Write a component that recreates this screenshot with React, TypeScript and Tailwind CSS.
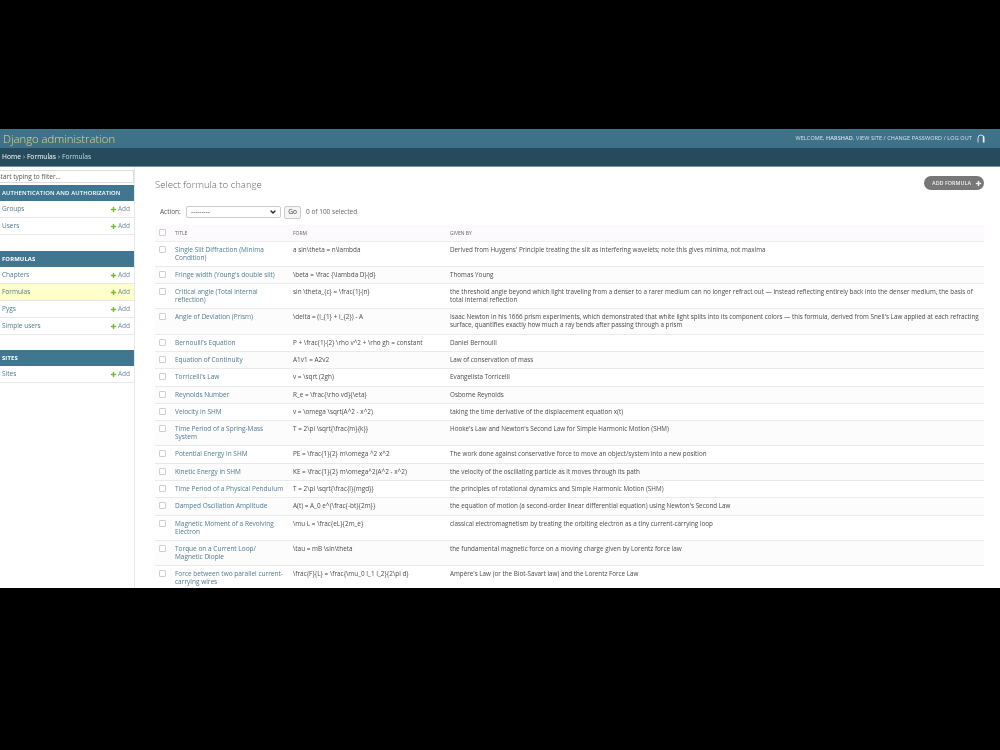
import React from 'react';
import { Plus, ChevronDown } from 'lucide-react';

const sections = [
  { name: 'Authentication and Authorization', bold: false, gap: 'mb-[16px]', rows: ['Groups', 'Users'] },
  { name: 'Formulas', bold: true, gap: 'mb-[15px]', rows: ['Chapters', 'Formulas', 'Pygs', 'Simple users'] },
  { name: 'Sites', bold: true, gap: 'mb-[15px]', rows: ['Sites'] },
];

const formulas = [
  ['Single Slit Diffraction (Minima Condition)', 'a sin\\theta = n\\lambda', "Derived from Huygens' Principle treating the slit as interfering wavelets; note this gives minima, not maxima"],
  ["Fringe width (Young's double slit)", '\\beta = \\frac {\\lambda D}{d}', 'Thomas Young'],
  ['Critical angle (Total internal reflection)', 'sin \\theta_{c} = \\frac{1}{n}', 'the threshold angle beyond which light traveling from a denser to a rarer medium can no longer refract out — instead reflecting entirely back into the denser medium, the basis of total internal reflection'],
  ['Angle of Deviation (Prism)', '\\delta = (i_{1} + i_{2}) - A', "Isaac Newton in his 1666 prism experiments, which demonstrated that white light splits into its component colors — this formula, derived from Snell's Law applied at each refracting surface, quantifies exactly how much a ray bends after passing through a prism"],
  ["Bernoulli's Equation", 'P + \\frac{1}{2} \\rho v^2 + \\rho gh = constant', 'Daniel Bernoulli'],
  ['Equation of Continuity', 'A1v1 = A2v2', 'Law of conservation of mass'],
  ["Torricelli's Law", 'v = \\sqrt (2gh)', 'Evangelista Torricelli'],
  ['Reynolds Number', 'R_e = \\frac{\\rho vd}{\\eta}', 'Osborne Reynolds'],
  ['Velocity in SHM', 'v = \\omega \\sqrt(A^2 - x^2)', 'taking the time derivative of the displacement equation x(t)'],
  ['Time Period of a Spring-Mass System', 'T = 2\\pi \\sqrt{\\frac{m}{k}}', "Hooke's Law and Newton's Second Law for Simple Harmonic Motion (SHM)"],
  ['Potential Energy in SHM', 'PE = \\frac{1}{2} m\\omega ^2 x^2', 'The work done against conservative force to move an object/system into a new position'],
  ['Kinetic Energy in SHM', 'KE = \\frac{1}{2} m\\omega^2(A^2 - x^2)', 'the velocity of the oscillating particle as it moves through its path'],
  ['Time Period of a Physical Pendulum', 'T = 2\\pi \\sqrt{\\frac{l}{mgd}}', 'the principles of rotational dynamics and Simple Harmonic Motion (SHM)'],
  ['Damped Oscillation Amplitude', 'A(t) = A_0 e^{\\frac{-bt}{2m}}', "the equation of motion (a second-order linear differential equation) using Newton's Second Law"],
  ['Magnetic Moment of a Revolving Electron', '\\mu L = \\frac{eL}{2m_e}', 'classical electromagnetism by treating the orbiting electron as a tiny current-carrying loop'],
  ['Torque on a Current Loop/ Magnetic Diople', '\\tau = mB \\sin\\theta', 'the fundamental magnetic force on a moving charge given by Lorentz force law'],
  ['Force between two parallel current-carrying wires', '\\frac{F}{L} = \\frac{\\mu_0 I_1 I_2}{2\\pi d}', "Ampère's Law (or the Biot-Savart law) and the Lorentz Force Law"],
];

const Checkbox = () => (
  <input type="checkbox" readOnly className="appearance-none block w-[7px] h-[7px] border border-[#cfcfcf] rounded-[1px] bg-white" />
);

const AddLink = () => (
  <span className="flex items-center gap-[1px] text-[#6b8c9c]">
    <Plus className="w-[7px] h-[7px] text-[#70bf2b]" strokeWidth={5} />
    Add
  </span>
);

export default function App() {
  return (
    <div className="h-[750px] bg-black overflow-hidden font-['Open_Sans','Noto_Sans',sans-serif]">
      <div className="h-[129px]" />
      <div className="h-[459px] bg-white overflow-hidden flex flex-col blur-[0.35px]">
        <header className="h-[19px] shrink-0 bg-[#3f7189] flex items-center justify-between pl-[3px] pr-[15px]">
          <div className="text-[11.3px] leading-none font-light text-[#e9dc7c]">Django administration</div>
          <div className="flex items-center gap-[5px] text-[5.5px] uppercase tracking-[0.02em] text-[#d5e2e9]">
            <span>
              Welcome, <b className="font-semibold">Harshad</b>. View site / Change password / Log out
            </span>
            <svg viewBox="0 0 8 9" className="w-[8px] h-[9px]" fill="none">
              <path d="M1 8.5V4a3 3 0 0 1 6 0v4.5" stroke="#f2f5f7" strokeWidth="0.8" />
              <path d="M6.5 2v6.5" stroke="#f2f5f7" strokeWidth="1.4" />
            </svg>
          </div>
        </header>
        <nav className="h-[19px] shrink-0 bg-[#264b5d] border-b border-[#6f95a8] flex items-center pl-[2px] text-[6.7px] text-[#c4dce8]">
          <span className="text-white">Home</span>
          <span className="mx-[2px]">›</span>
          <span className="text-white">Formulas</span>
          <span className="mx-[2px]">›</span>
          <span>Formulas</span>
        </nav>
        <div className="flex flex-1 min-h-0">
          <aside className="w-[135px] shrink-0 border-r border-[#e8e8e8] pt-[3px]">
            <div className="h-[13px] -ml-px mb-[2px] border border-[#ddd] bg-white flex items-center text-[6.5px] text-[#555]">
              <span className="-ml-[3px]">Start typing to filter...</span>
            </div>
            {sections.map(section => (
              <div key={section.name} className={section.gap}>
                <div className={`h-[16px] bg-[#417690] flex items-center pl-[2px] text-[5.9px] uppercase tracking-[0.02em] text-white ${section.bold ? 'font-bold' : 'font-semibold'}`}>
                  {section.name}
                </div>
                {section.rows.map(row => (
                  <div
                    key={row}
                    className={`h-[17px] border-b border-[#e8e8e8] flex items-center justify-between pl-[2px] pr-[4px] text-[6.5px] ${row === 'Formulas' ? 'bg-[#ffffcc]' : 'bg-white'}`}
                  >
                    <span className="text-[#4f7a90]">{row}</span>
                    <AddLink />
                  </div>
                ))}
              </div>
            ))}
          </aside>
          <main className="flex-1 min-w-0 pl-[20px] pr-[16px] pt-[9px]">
            <div className="flex items-start justify-between h-[27px]">
              <h1 className="text-[9.6px] leading-[17px] font-light text-[#666]">Select formula to change</h1>
              <span className="h-[14px] w-[60px] rounded-full bg-[#777] flex items-center justify-end gap-[4px] pr-[2px] text-[5.4px] font-semibold uppercase text-[#eeeeee]">
                Add formula
                <Plus className="w-[7px] h-[7px]" strokeWidth={5} />
              </span>
            </div>
            <div className="h-[18px] flex items-center pl-[5px] text-[6.5px] text-[#555]">
              <span className="w-[26px]">Action:</span>
              <span className="w-[95px] h-[12px] border border-[#ccc] rounded-[2px] flex items-center justify-between pl-[4px] pr-[3px] text-[#444]">
                ---------
                <ChevronDown className="w-[8px] h-[8px] text-[#222]" strokeWidth={4} />
              </span>
              <span className="ml-[3px] w-[17px] h-[13px] border border-[#ccc] rounded-[2px] bg-[#f5f5f5] flex items-center justify-center text-[#333]">Go</span>
              <span className="ml-[5px] text-[#666]">0 of 100 selected</span>
            </div>
            <table className="w-full table-fixed border-collapse mt-[4px] text-[6.5px] leading-[8px]">
              <colgroup>
                <col className="w-[20px]" />
                <col className="w-[118px]" />
                <col className="w-[157px]" />
                <col />
              </colgroup>
              <thead>
                <tr className="h-[16px] bg-[#fcfafc] border-b border-[#eeeeee] text-[5px] uppercase text-[#666] text-left">
                  <th className="pl-[4px] font-normal"><Checkbox /></th>
                  <th className="font-normal">Title</th>
                  <th className="font-normal">Form</th>
                  <th className="font-normal">Given by</th>
                </tr>
              </thead>
              <tbody>
                {formulas.map((f, i) => (
                  <tr key={f[0]} className={`border-b border-[#eaeaea] align-top ${i % 2 ? 'bg-[#fcfcfc]' : 'bg-white'}`}>
                    <td className="pl-[4px] pt-[4px] pb-[4.3px]"><Checkbox /></td>
                    <td className="pt-[4px] pb-[4.3px] pr-[9px] text-[#4f7a90]">{f[0]}</td>
                    <td className="pt-[4px] pb-[4.3px] pr-[4px] text-[6.4px] text-[#4a4a4a]">{f[1]}</td>
                    <td className="pt-[4px] pb-[4.3px] text-[6.3px] text-[#4a4a4a]">{f[2]}</td>
                  </tr>
                ))}
              </tbody>
            </table>
          </main>
        </div>
      </div>
    </div>
  );
}
